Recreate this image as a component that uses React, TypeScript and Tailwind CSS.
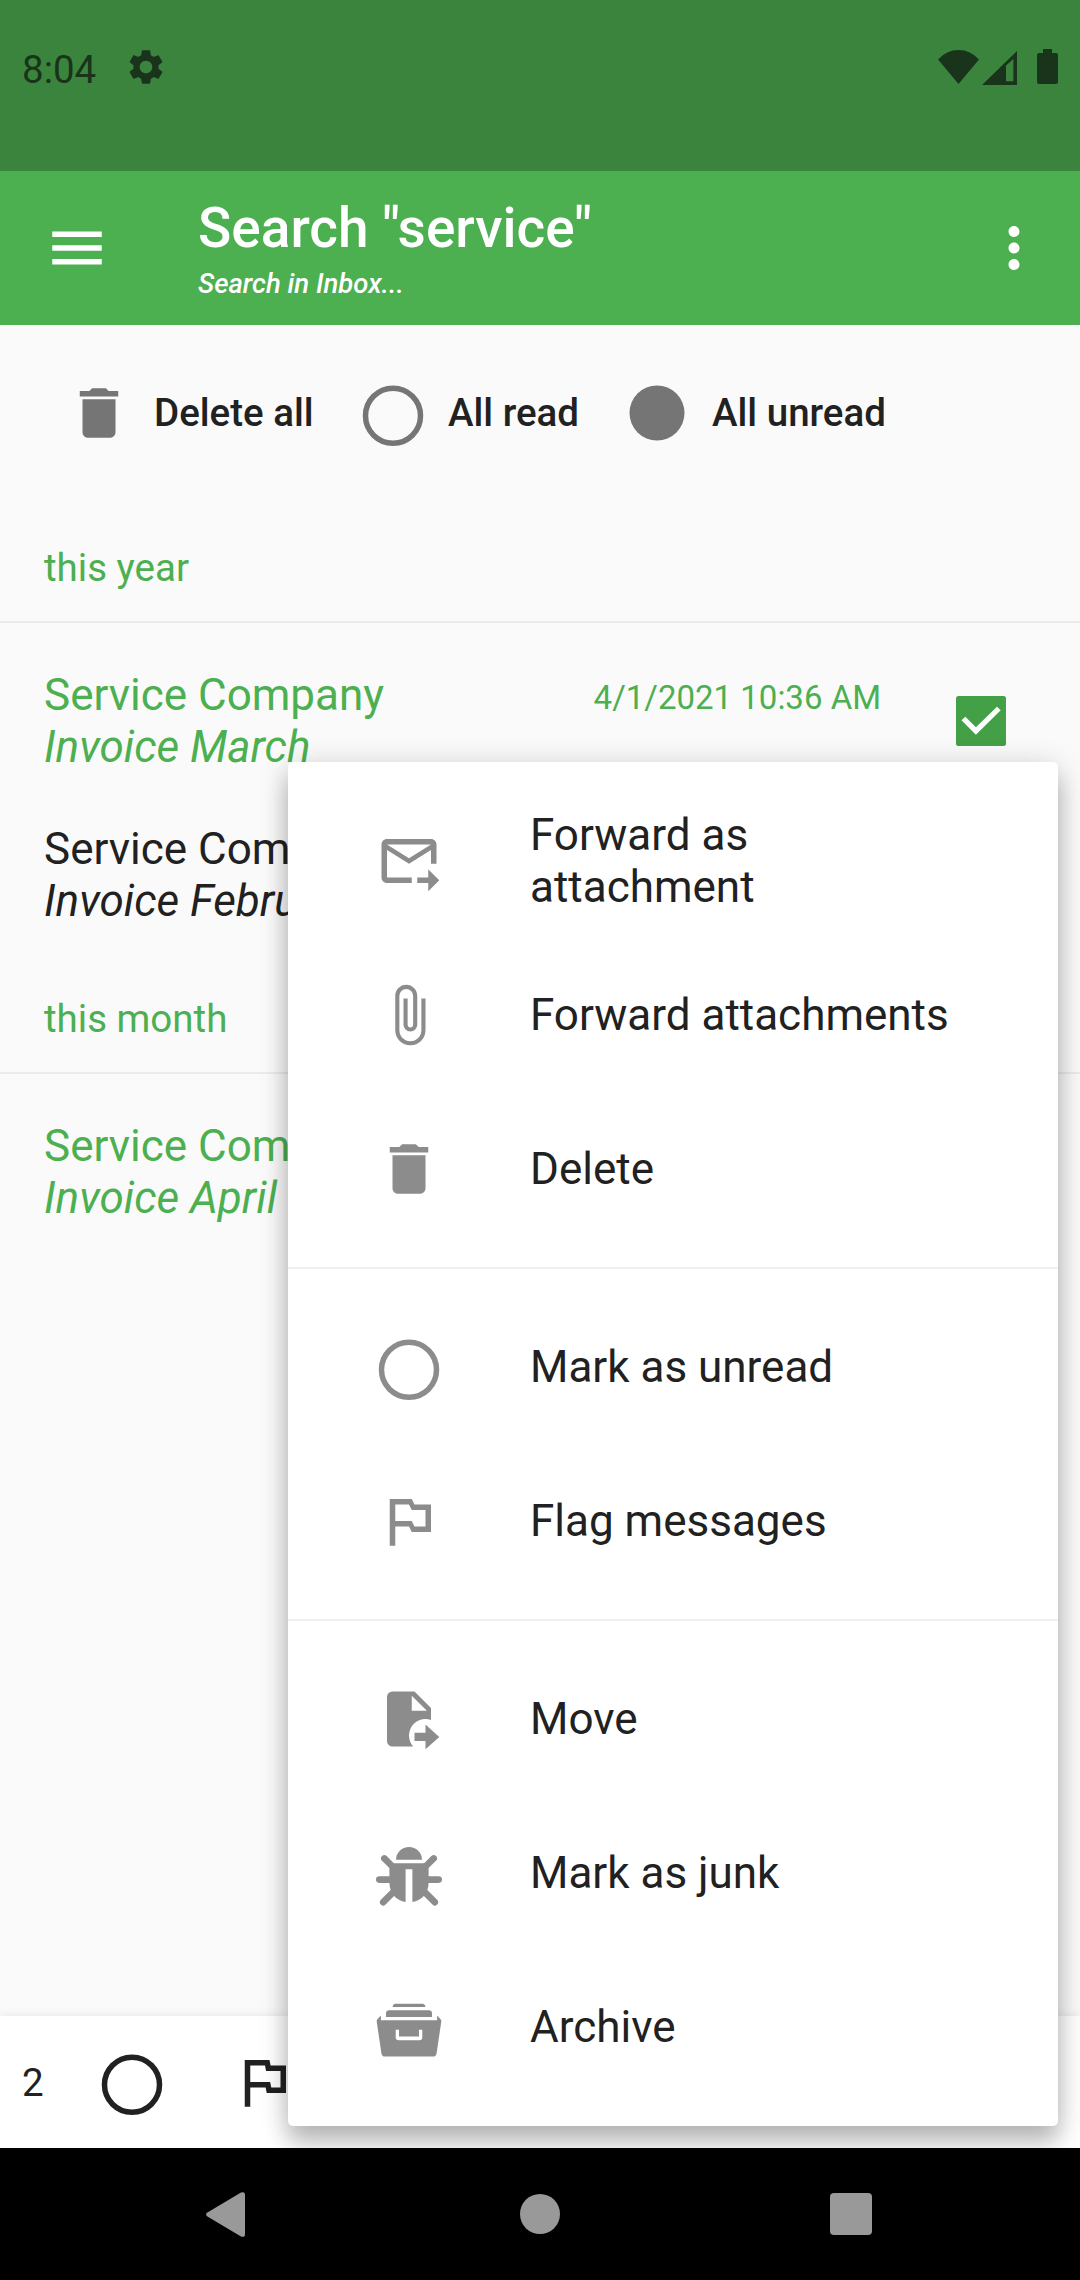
import type { ReactNode } from "react";
import {
  MdAttachFile,
  MdDelete,
  MdMenu,
  MdMoreVert,
  MdOutlineFlag,
  MdSettings,
} from "react-icons/md";

const ICON = "block h-[66px] w-[66px] shrink-0";

function Ring() {
  return (
    <svg viewBox="0 0 24 24" className={ICON} overflow="visible">
      <circle cx="12" cy="13" r="10" fill="none" stroke="currentColor" strokeWidth="2" />
    </svg>
  );
}

function Dot() {
  return (
    <svg viewBox="0 0 24 24" className={ICON}>
      <circle cx="12" cy="12" r="10" fill="currentColor" />
    </svg>
  );
}

function ForwardMail() {
  return (
    <svg viewBox="0 0 24 24" className={ICON} fill="currentColor">
      <path d="M20 4H4c-1.1 0-2 .9-2 2v12c0 1.1.9 2 2 2h9v-2H4V8l8 5 8-5v5h2V6c0-1.1-.9-2-2-2zm-8 7L4 6h16l-8 5zm7 4l4 4-4 4v-3h-4v-2h4v-3z" />
    </svg>
  );
}

function Flag() {
  return (
    <svg viewBox="0 0 24 24" className={ICON} fill="currentColor">
      <path d="M14 6l-1-2H5v17h2v-7h5l1 2h7V6h-6zm4 8h-4l-1-2H7V6h5l1 2h5v6z" />
    </svg>
  );
}

function FileMove() {
  return (
    <svg viewBox="0 0 24 24" className={ICON} fill="currentColor">
      <path d="M14,17H18V14L23,18.5L18,23V20H14V17M13,9H18.5L13,3.5V9M6,2H14L20,8V12.34C19.37,12.12 18.7,12 18,12A6,6 0 0,0 12,18C12,19.54 12.58,20.94 13.53,22H6C4.89,22 4,21.1 4,20V4A2,2 0 0,1 6,2Z" />
    </svg>
  );
}

function Bug() {
  return (
    <svg viewBox="0 0 66 66" className={ICON} fill="currentColor">
      <path d="M20 19.8a13 12.8 0 0 1 26 0z" />
      <path d="M13.4 23.2H52.6V42.5C52.6 53 46 60.5 36.4 62V29.2H29.6V62C20 60.5 13.4 53 13.4 42.5z" />
      <path
        d="M8.3 18.4L16 26M57.7 18.4L50 26M3.3 39.6H15M62.7 39.6H51M7.2 62.2L17 52.4M58.8 62.2L49 52.4"
        fill="none"
        stroke="currentColor"
        strokeWidth="6.6"
        strokeLinecap="round"
      />
    </svg>
  );
}

function ArchiveBox() {
  return (
    <svg viewBox="0 0 66 66" className={ICON} fill="currentColor">
      <path d="M16.6 13c0-2 1.2-3.3 3-3.3h26.8c1.8 0 3 1.3 3 3.3z" />
      <path d="M10 23v-3.7c0-1.8 1.2-3 3-3h40c1.8 0 3 1.2 3 3V23z" />
      <path
        fillRule="evenodd"
        d="M4.9 21.6V26.200H61.1V21.600L64.4 24.900Q65.500 26 65.300 27.500L60.600 59.200Q60.100 62.600 57 62.600H9Q5.900 62.600 5.400 59.200L.7 27.500Q.5 26 1.600 24.900zM19.700 35.800V43.300Q19.700 46.300 22.700 46.300H43.300Q46.300 46.300 46.300 43.300V35.800H43V42.600H23V35.800z"
      />
    </svg>
  );
}

function CheckedBox() {
  return (
    <svg viewBox="0 0 50 50" className="mr-[74px] mt-[73px] h-[50px] w-[50px] shrink-0">
      <rect width="50" height="50" rx="2.500" fill="#43a047" />
      <path d="M5.500 24.300L19.900 38.700L44.700 14.300L41 10.700L19.900 31.300L9.300 20.700z" fill="#fff" />
    </svg>
  );
}

function StatusBar() {
  return (
    <div className="flex h-[171px] shrink-0 bg-[#3b843e] pl-[22px] pr-[22px] text-[#1a331b]">
      <span className="mt-[47px] w-[103px] text-[38.5px] leading-[46px]">8:04</span>
      <MdSettings className="mt-[46px] h-[42px] w-[42px]" />
      <div className="ml-auto flex">
        <svg viewBox="0 0 41 34" className="mt-[50px] h-[34px] w-[41px]" fill="currentColor">
          <path d="M0 9.500Q8.500 0 20.500 0T41 9.500L20.500 34z" />
        </svg>
        <svg viewBox="0 0 35 34" className="ml-[3px] mt-[51px] h-[34px] w-[35px]" fill="currentColor">
          <path fillRule="evenodd" d="M0 34L35 0V34zM24 14.500V30.300H31.400V8z" />
        </svg>
        <svg viewBox="0 0 21 35" className="ml-[20px] mt-[49px] h-[35px] w-[21px]" fill="currentColor">
          <path d="M6 0h9v4h4q2 0 2 2v27q0 2-2 2H2q-2 0-2-2V6q0-2 2-2h4z" />
        </svg>
      </div>
    </div>
  );
}

function AppBar() {
  return (
    <header className="flex h-[154px] shrink-0 items-center bg-[#4caf50] pl-[44px] pr-[33px] text-white">
      <MdMenu className={ICON} />
      <div className="ml-[88px] flex flex-1 flex-col font-medium">
        <h1 className="text-[55px] leading-[64px] font-medium">Search "service"</h1>
        <p className="mt-[7px] text-[27.5px] italic leading-[34px]">Search in Inbox...</p>
      </div>
      <MdMoreVert className={ICON} />
    </header>
  );
}

function QuickAction({ icon, label, className }: { icon: ReactNode; label: string; className: string }) {
  return (
    <button className={`flex shrink-0 items-center gap-[22px] whitespace-nowrap ${className}`}>
      <span className="text-[#757575]">{icon}</span>
      <span>{label}</span>
    </button>
  );
}

function SectionHeader({ label }: { label: string }) {
  return (
    <div className="flex h-[143px] shrink-0 flex-col justify-end border-b-2 border-[#ebebeb] pb-[30px] pl-[44px] text-[38.5px] leading-[46px] text-[#4caf50]">
      {label}
    </div>
  );
}

type Message = { from: string; subject: string; date?: string; green?: boolean };

function MessageRow({ from, subject, date, green }: Message) {
  return (
    <div className={`flex h-[154px] shrink-0 pl-[44px] ${green ? "text-[#4caf50]" : "text-[#212121]"}`}>
      <div className="mt-[46px] flex-1 text-[44px] leading-[52px]">
        <div>{from}</div>
        <div className="italic">{subject}</div>
      </div>
      {date && (
        <>
          <span className="mr-[75px] mt-[56px] text-[33px] leading-[38px]">{date}</span>
          <CheckedBox />
        </>
      )}
    </div>
  );
}

const MENU: { icon: ReactNode; label: string }[][] = [
  [
    { icon: <ForwardMail />, label: "Forward as attachment" },
    { icon: <MdAttachFile className={ICON} />, label: "Forward attachments" },
    { icon: <MdDelete className={ICON} />, label: "Delete" },
  ],
  [
    { icon: <Ring />, label: "Mark as unread" },
    { icon: <Flag />, label: "Flag messages" },
  ],
  [
    { icon: <FileMove />, label: "Move" },
    { icon: <Bug />, label: "Mark as junk" },
    { icon: <ArchiveBox />, label: "Archive" },
  ],
];

function ContextMenu() {
  return (
    <div className="absolute left-[288px] top-[762px] h-[1364px] w-[770px] rounded-[5px] bg-white py-[22px] shadow-[0_18px_22px_rgba(0,0,0,0.2),0_4px_30px_rgba(0,0,0,0.18)]">
      {MENU.map((group, i) => (
        <div key={i} className={i > 0 ? "mt-[21px] border-t-2 border-[#efefef] pt-[21px]" : ""}>
          {group.map((item) => (
            <div key={item.label} className="flex h-[154px] items-center pl-[88px] pr-[88px]">
              <span className="text-[#8c8c8c]">{item.icon}</span>
              <span className="ml-[88px] text-[44px] leading-[52px] text-[#212121]">{item.label}</span>
            </div>
          ))}
        </div>
      ))}
    </div>
  );
}

function NavigationBar() {
  return (
    <nav className="flex h-[132px] shrink-0 items-center bg-black pl-[206px] text-[#999]">
      <svg viewBox="0 0 39 45" className="h-[45px] w-[39px]" fill="currentColor">
        <path d="M1 20.800L35 .6Q39-1 39 3V42Q39 46 35 44.400L1 24.200Q-.8 22.500 1 20.800z" />
      </svg>
      <span className="ml-[275px] h-[40px] w-[40px] rounded-full bg-[#999]" />
      <span className="ml-[270px] h-[42px] w-[42px] rounded-[4px] bg-[#999]" />
    </nav>
  );
}

export default function App() {
  return (
    <div className="flex h-[2280px] w-[1080px] flex-col overflow-hidden bg-black font-['Roboto',sans-serif]">
      <div className="relative flex h-[2148px] shrink-0 flex-col overflow-hidden bg-[#fafafa]">
        <StatusBar />
        <AppBar />
        <div className="flex h-[155px] shrink-0 pb-[34px] pl-[66px] pt-[55px] text-[38.5px] leading-[46px] font-medium text-[#212121]">
          <QuickAction icon={<MdDelete className={ICON} />} label="Delete all" className="w-[294px]" />
          <QuickAction icon={<Ring />} label="All read" className="w-[264px]" />
          <QuickAction icon={<Dot />} label="All unread" className="" />
        </div>
        <SectionHeader label="this year" />
        <MessageRow from="Service Company" subject="Invoice March" date="4/1/2021 10:36 AM" green />
        <MessageRow from="Service Company" subject="Invoice February" />
        <SectionHeader label="this month" />
        <MessageRow from="Service Company" subject="Invoice April" green />
        <div className="mt-auto flex h-[132px] shrink-0 items-center bg-white pl-[22px] text-[#212121] shadow-[0_0_10px_rgba(0,0,0,0.09)]">
          <span className="mt-[2px] w-[77px] text-[38.5px] leading-[46px]">2</span>
          <Ring />
          <MdOutlineFlag className="ml-[66px] h-[66px] w-[66px]" />
        </div>
        <ContextMenu />
      </div>
      <NavigationBar />
    </div>
  );
}
